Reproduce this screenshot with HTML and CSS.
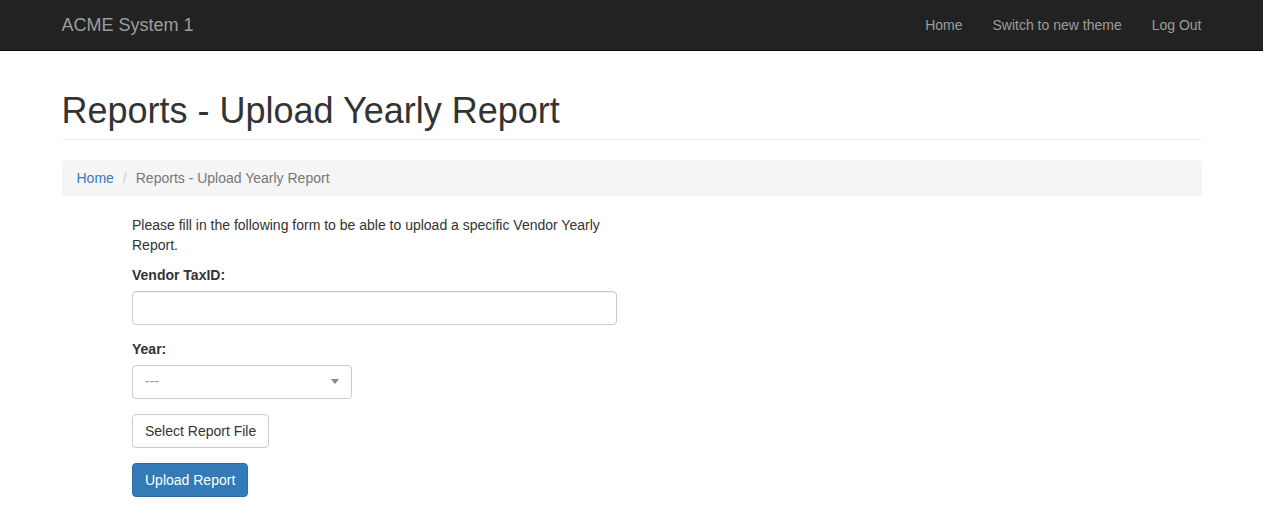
FILE: index.html
```html
<!DOCTYPE html>
<html>
<head>
<meta charset="utf-8">
<title>Reports - Upload Yearly Report</title>
<link rel="stylesheet" href="styles.css">
</head>
<body>
<nav class="navbar">
  <div class="container navbar-inner">
    <a class="brand" href="#">ACME System 1</a>
    <ul class="nav">
      <li><a href="#">Home</a></li>
      <li><a href="#">Switch to new theme</a></li>
      <li><a href="#">Log Out</a></li>
    </ul>
  </div>
</nav>
<main class="container">
  <div class="page-header">
    <h1>Reports - Upload Yearly Report</h1>
  </div>
  <ol class="breadcrumb">
    <li><a href="#">Home</a></li>
    <li class="sep">/</li>
    <li class="active">Reports - Upload Yearly Report</li>
  </ol>
  <form class="upload-form">
    <p>Please fill in the following form to be able to upload a specific Vendor Yearly Report.</p>
    <div class="form-group">
      <label class="label">Vendor TaxID:</label>
      <input class="form-control" type="text">
    </div>
    <div class="form-group">
      <label class="label">Year:</label>
      <div class="select">
        <span class="placeholder">---</span>
        <span class="caret"></span>
      </div>
    </div>
    <div class="form-group">
      <button type="button" class="btn btn-default">Select Report File</button>
    </div>
    <div class="form-group">
      <button type="button" class="btn btn-primary">Upload Report</button>
    </div>
  </form>
</main>
</body>
</html>
```
FILE: styles.css
```css
* { box-sizing: border-box; }
html, body { margin: 0; padding: 0; }
body {
  font-family: "Liberation Sans", Arial, Helvetica, sans-serif;
  font-size: 14px;
  line-height: 1.428571;
  color: #333;
  background: #fff;
}
a { text-decoration: none; }
.container {
  width: 1170px;
  margin: 0 auto;
  padding: 0 15px;
}
.navbar {
  background: #222;
  border-bottom: 1px solid #080808;
  height: 51px;
}
.navbar-inner {
  display: flex;
  justify-content: space-between;
  align-items: stretch;
  height: 50px;
}
.brand {
  color: #9d9d9d;
  font-size: 18px;
  line-height: 20px;
  padding: 15px 0;
}
.nav {
  list-style: none;
  margin: 0 -15px 0 0;
  padding: 0;
  display: flex;
}
.nav a {
  display: block;
  color: #9d9d9d;
  padding: 15px;
  line-height: 20px;
}
.page-header {
  margin: 40px 0 20px;
  padding-bottom: 8px;
  border-bottom: 1px solid #eee;
}
.page-header h1 {
  margin: 0;
  font-size: 36px;
  font-weight: 500;
  line-height: 40px;
}
.breadcrumb {
  list-style: none;
  margin: 0 0 20px;
  padding: 8px 15px;
  background: #f5f5f5;
  border-radius: 4px;
  display: flex;
  line-height: 20px;
}
.breadcrumb a { color: #337ab7; }
.breadcrumb .sep { color: #ccc; padding: 0 5px; margin-left: 4px; margin-right: 4px; }
.breadcrumb .active { color: #777; }
.upload-form {
  margin-left: 70.5px;
  width: 485px;
}
.upload-form p { margin: 0 0 10px; }
.form-group { margin-bottom: 15px; }
.label {
  display: inline-block;
  font-weight: bold;
  margin-bottom: 5px;
}
.form-control {
  display: block;
  width: 100%;
  height: 34px;
  padding: 6px 12px;
  border: 1px solid #ccc;
  border-radius: 4px;
  box-shadow: inset 0 1px 1px rgba(0,0,0,.075);
  font: inherit;
  color: #555;
}
.select {
  width: 220px;
  height: 34px;
  border: 1px solid #ccc;
  border-radius: 4px;
  padding: 6px 12px;
  display: flex;
  align-items: center;
  justify-content: space-between;
}
.placeholder { color: #999; }
.caret {
  width: 0;
  height: 0;
  border-left: 4px solid transparent;
  border-right: 4px solid transparent;
  border-top: 5px solid #888;
}
.btn {
  display: inline-block;
  height: 34px;
  padding: 6px 12px;
  font: inherit;
  line-height: 20px;
  border: 1px solid transparent;
  border-radius: 4px;
  cursor: pointer;
}
.btn-default {
  background: #fff;
  color: #333;
  border-color: #ccc;
}
.btn-primary {
  background: #337ab7;
  color: #fff;
  border-color: #2e6da4;
}
```
